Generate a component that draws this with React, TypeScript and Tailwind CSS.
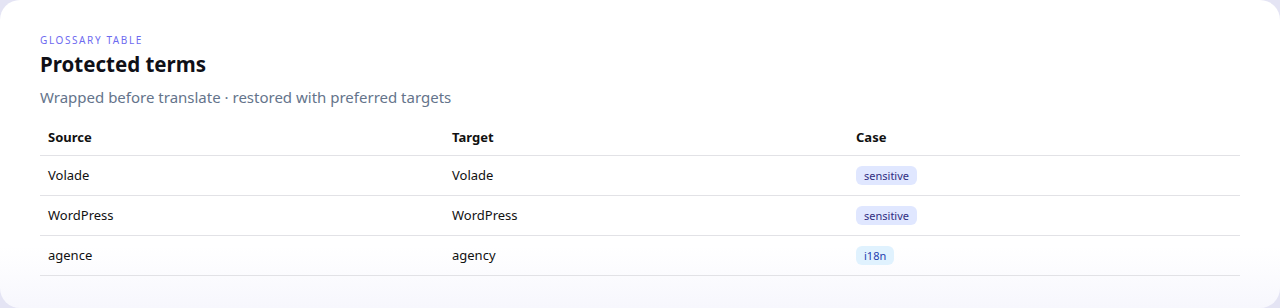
const rows = [
  { source: 'Volade', target: 'Volade', tag: 'sensitive' },
  { source: 'WordPress', target: 'WordPress', tag: 'sensitive' },
  { source: 'agence', target: 'agency', tag: 'i18n' },
]

function Tag({ label }: { label: string }) {
  const tone =
    label === 'i18n'
      ? 'bg-[#e0f2fe] text-[#1e40af]'
      : 'bg-[#e0e7ff] text-[#312e81]'
  return (
    <span className={`inline-flex h-[19px] items-center rounded-md px-2 text-[11px] leading-none ${tone}`}>
      {label}
    </span>
  )
}

export default function App() {
  return (
    <div className="h-[308px] w-[1280px] bg-[#e4e4f4] font-['Noto_Sans',sans-serif]">
      <section className="h-full rounded-[20px] bg-gradient-to-b from-white from-80% to-[#f7f7fd] px-10 pt-[33px]">
        {/* Heading */}
        <p className="text-[10px] uppercase leading-[14px] tracking-[0.16em] text-[#6d6af0]">Glossary table</p>
        <h2 className="mt-[3px] text-[20.5px] font-bold leading-[28px] text-[#0f0f17]">Protected terms</h2>
        <p className="mt-[8px] text-[15px] leading-[22px] text-[#64748b]">
          Wrapped before translate · restored with preferred targets
        </p>

        {/* Table */}
        <div className="mt-[13px] text-[13px] text-[#111]">
          <div className="grid h-[35px] grid-cols-[404px_404px_1fr] items-center border-b border-[#e2e2e6] font-bold">
            <div className="px-2">Source</div>
            <div className="px-2">Target</div>
            <div className="px-2">Case</div>
          </div>
          {rows.map((r) => (
            <div
              key={r.source}
              className="grid h-[40px] grid-cols-[404px_404px_1fr] items-center border-b border-[#e2e2e6]"
            >
              <div className="px-2">{r.source}</div>
              <div className="px-2">{r.target}</div>
              <div className="px-2">
                <Tag label={r.tag} />
              </div>
            </div>
          ))}
        </div>
      </section>
    </div>
  )
}
